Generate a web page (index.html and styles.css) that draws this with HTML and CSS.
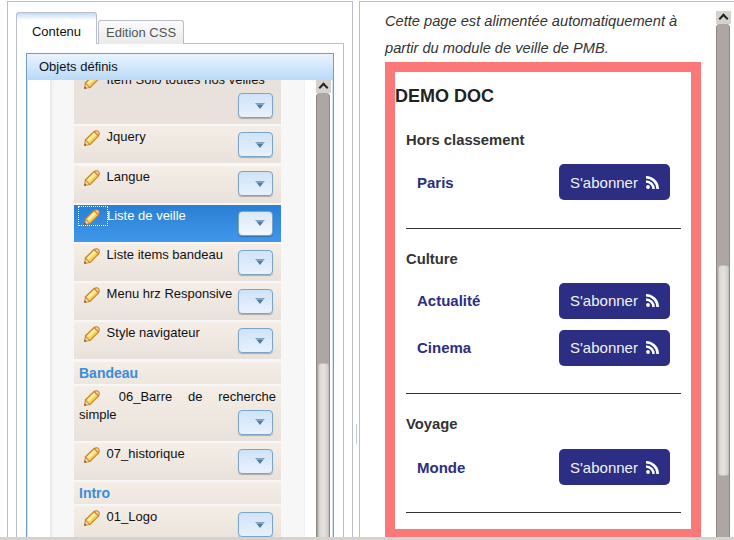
FILE: index.html
```html
<!DOCTYPE html>
<html lang="fr">
<head>
    <meta charset="UTF-8">
    <meta name="viewport" content="width=device-width, initial-scale=1.0">
    <title>Objets définis</title>
    <link rel="stylesheet" href="styles.css">
</head>
<body>
    <svg class="defs">
        <defs>
            <symbol id="pencil" viewBox="0 0 16 16">
                <path d="M0.3 15.7 L0.9 9.6 L9.4 1.2 Q12.6 -0.6 15 1.2 Q16.6 3.6 14.8 6.6 L6.4 15.1 Z" fill="#c67f2e"/>
                <path d="M2 10.2 L10 2.3 L13.8 6 L5.8 14 Z" fill="#f4cf55"/>
                <path d="M3 9.8 L10 2.9 L12 4.9 L5 11.8 Z" fill="#fdefa0"/>
                <path d="M11 1.8 Q13 0.9 14.3 1.8 Q15.2 3.2 14.3 5 Z" fill="#f3cda4"/>
                <path d="M1.7 11 L5 14.3 L1.2 14.9 Z" fill="#f0d6a8"/>
                <path d="M0.3 15.7 L0.6 13.4 L2.6 15.3 Z" fill="#6b4318"/>
            </symbol>
            <symbol id="arrow" viewBox="0 0 12 7">
                <path d="M0 0 H12 L10 2 H2 Z" fill="#7f9fbd"/>
                <path d="M2 2 H10 L6 7 Z" fill="#4f7ba3"/>
            </symbol>
            <symbol id="rss" viewBox="0 0 13 13">
                <circle cx="2" cy="11" r="1.9" fill="#fff"/>
                <path d="M0 4.2 A8.8 8.8 0 0 1 8.8 13 H6.2 A6.2 6.2 0 0 0 0 6.8 Z" fill="#fff"/>
                <path d="M0 0 A13 13 0 0 1 13 13 H10.4 A10.4 10.4 0 0 0 0 2.6 Z" fill="#fff"/>
            </symbol>
        </defs>
    </svg>

    <div class="workspace">
        <section class="panel panel-left">
            <div class="tabs">
                <div class="tab tab-active">Contenu</div>
                <div class="tab">Edition CSS</div>
            </div>
            <div class="tab-body">
                <div class="objets">
                    <div class="objets-title">Objets définis</div>
                    <div class="objets-body">
                        <div class="list-col">
                            <div class="list">
                                <div class="row row-first">
                                    <span class="pencil"><svg><use href="#pencil"/></svg></span> Item Solo toutes nos veilles
                                    <span class="drop"><svg><use href="#arrow"/></svg></span>
                                </div>
                                <div class="row">
                                    <span class="pencil"><svg><use href="#pencil"/></svg></span> Jquery
                                    <span class="drop"><svg><use href="#arrow"/></svg></span>
                                </div>
                                <div class="row">
                                    <span class="pencil"><svg><use href="#pencil"/></svg></span> Langue
                                    <span class="drop"><svg><use href="#arrow"/></svg></span>
                                </div>
                                <div class="row row-selected">
                                    <span class="pencil pencil-focus"><svg><use href="#pencil"/></svg></span>Liste de veille
                                    <span class="drop"><svg><use href="#arrow"/></svg></span>
                                </div>
                                <div class="row">
                                    <span class="pencil"><svg><use href="#pencil"/></svg></span> Liste items bandeau
                                    <span class="drop"><svg><use href="#arrow"/></svg></span>
                                </div>
                                <div class="row">
                                    <span class="pencil"><svg><use href="#pencil"/></svg></span> Menu hrz Responsive
                                    <span class="drop"><svg><use href="#arrow"/></svg></span>
                                </div>
                                <div class="row">
                                    <span class="pencil"><svg><use href="#pencil"/></svg></span> Style navigateur
                                    <span class="drop"><svg><use href="#arrow"/></svg></span>
                                </div>
                                <div class="group">Bandeau</div>
                                <div class="row">
                                    <span class="pencil"><svg><use href="#pencil"/></svg></span> 06_Barre de recherche simple
                                    <span class="drop"><svg><use href="#arrow"/></svg></span>
                                </div>
                                <div class="row">
                                    <span class="pencil"><svg><use href="#pencil"/></svg></span> 07_historique
                                    <span class="drop"><svg><use href="#arrow"/></svg></span>
                                </div>
                                <div class="group">Intro</div>
                                <div class="row">
                                    <span class="pencil"><svg><use href="#pencil"/></svg></span> 01_Logo
                                    <span class="drop"><svg><use href="#arrow"/></svg></span>
                                </div>
                            </div>
                        </div>
                        <div class="vscroll vscroll-left">
                            <div class="vscroll-up"></div>
                            <div class="vscroll-track"><div class="vscroll-thumb"></div></div>
                        </div>
                    </div>
                </div>
            </div>
        </section>

        <div class="splitter"><span class="splitter-grip"></span></div>

        <section class="panel panel-right">
            <div class="page">
                <p class="intro">Cette page est alimentée automatiquement à partir du module de veille de PMB.</p>
                <div class="veille">
                    <h2 class="veille-title">DEMO DOC</h2>
                    <div class="veille-group">
                        <h3>Hors classement</h3>
                        <div class="veille-row">
                            <a class="veille-name">Paris</a>
                            <a class="subscribe">S'abonner <svg><use href="#rss"/></svg></a>
                        </div>
                    </div>
                    <div class="veille-group">
                        <h3>Culture</h3>
                        <div class="veille-row">
                            <a class="veille-name">Actualité</a>
                            <a class="subscribe">S'abonner <svg><use href="#rss"/></svg></a>
                        </div>
                        <div class="veille-row">
                            <a class="veille-name">Cinema</a>
                            <a class="subscribe">S'abonner <svg><use href="#rss"/></svg></a>
                        </div>
                    </div>
                    <div class="veille-group">
                        <h3>Voyage</h3>
                        <div class="veille-row">
                            <a class="veille-name">Monde</a>
                            <a class="subscribe">S'abonner <svg><use href="#rss"/></svg></a>
                        </div>
                    </div>
                </div>
            </div>
            <div class="vscroll vscroll-right">
                <div class="vscroll-up"></div>
                <div class="vscroll-track"><div class="vscroll-thumb"></div></div>
            </div>
        </section>
    </div>
    <div class="hscroll"></div>
</body>
</html>
```

FILE: styles.css
```css
html, body {
    height: 100%;
}
body {
    margin: 0;
    display: flex;
    flex-direction: column;
    overflow: hidden;
    font-family: "Liberation Sans", Arial, sans-serif;
    background: #ffffff;
    color: #111111;
}
.defs {
    display: none;
}
.workspace {
    flex: 1;
    min-height: 0;
    display: flex;
    padding: 1px 0 0 7px;
    overflow: hidden;
}
.hscroll {
    height: 3px;
    background: #d6d3cf;
}

/* panels */
.panel {
    box-sizing: border-box;
    border: 1px solid #b9bdcc;
    border-bottom: none;
    min-height: 0;
}
.panel-left {
    width: 346px;
    display: flex;
    flex-direction: column;
    padding: 10px 8px 0 8px;
}
.panel-right {
    flex: 1;
    display: flex;
    border-right: none;
    overflow: hidden;
}
.splitter {
    width: 6px;
    display: flex;
    align-items: flex-end;
    justify-content: center;
    padding-bottom: 93px;
    box-sizing: border-box;
}
.splitter-grip {
    width: 1px;
    height: 20px;
    background: #c5c9d4;
}

/* tabs */
.tabs {
    display: flex;
    align-items: flex-end;
    gap: 1px;
    position: relative;
    z-index: 1;
    margin-bottom: -1px;
}
.tab {
    box-sizing: border-box;
    height: 24px;
    padding: 0 7px;
    line-height: 23px;
    font-size: 13px;
    color: #555555;
    background: linear-gradient(#fbfbfb, #eaeaea);
    border: 1px solid #b9bdcc;
    border-bottom: none;
    border-radius: 3px 3px 0 0;
}
.tab-active {
    width: 81px;
    height: 32px;
    padding: 5px 0 0;
    text-align: center;
    line-height: 27px;
    color: #111111;
    background: linear-gradient(#bfdcf8, #ffffff 7px);
}
.tab-body {
    flex: 1;
    min-height: 0;
    border: 1px solid #b9bdcc;
    border-bottom: none;
    padding: 9px 9px 0;
}
.objets {
    height: 100%;
    box-sizing: border-box;
    display: flex;
    flex-direction: column;
    border: 1px solid #6f9cc3;
    border-bottom: none;
}
.objets-title {
    height: 26px;
    line-height: 25px;
    padding-left: 12px;
    font-size: 13px;
    background: linear-gradient(#e9f4fe, #b9daf9);
}
.objets-body {
    flex: 1;
    min-height: 0;
    display: flex;
    padding-left: 22px;
    border-left: 1px solid #cfe3f6;
    border-right: 1px solid #cfe3f6;
    overflow: hidden;
}

/* list */
.list-col {
    width: 255px;
    flex-shrink: 0;
    background: #f7f7f7;
    box-shadow: inset 4px 0 3px -2px rgba(0, 0, 0, 0.07), inset -1px 0 1px rgba(0, 0, 0, 0.03);
    padding-left: 24px;
    box-sizing: border-box;
    overflow: hidden;
}
.list {
    width: 207px;
    display: flex;
    flex-direction: column;
    gap: 2.2px;
    margin-top: -10.7px;
    font-size: 13px;
    line-height: 18px;
}
.row {
    display: flow-root;
    padding: 2px 5px 0;
    text-align: justify;
    background: linear-gradient(#f5eee6, #e9e2dc);
}
.row-first {
    background: #e9e2dc;
}
.row-selected {
    color: #ffffff;
    background: linear-gradient(#2a7fd3, #4197e9);
}
.pencil {
    display: inline-block;
    height: 18px;
    padding: 0 3px 0 5px;
    vertical-align: top;
}
.pencil svg {
    display: block;
    width: 16px;
    height: 16px;
    margin-top: 2px;
}
.pencil-focus {
    padding-right: 7px;
    outline: 1px dotted #ffffff;
}
.drop {
    float: right;
    box-sizing: border-box;
    width: 35px;
    height: 25px;
    margin: 3.8px 3px 6.2px 0;
    display: flex;
    align-items: center;
    justify-content: center;
    padding: 0 0 0 8px;
    border: 1px solid #7aa4c8;
    border-radius: 4px;
    background: linear-gradient(#cfe3f7, #e8f2fc);
    box-shadow: 0 1px 1px rgba(0, 0, 0, 0.25);
}
.drop svg {
    width: 10px;
    height: 6px;
}
.row-selected .drop {
    background: linear-gradient(#dbe8f5, #f4f8fc);
}
.group {
    height: 22px;
    line-height: 22px;
    padding-left: 5px;
    font-size: 14px;
    font-weight: bold;
    color: #3a8ddc;
    background: linear-gradient(#f5eee6, #ede6df);
}

/* scrollbars */
.vscroll {
    display: flex;
    flex-direction: column;
    flex-shrink: 0;
    box-sizing: border-box;
}
.vscroll-left {
    width: 15px;
    margin-left: 11px;
}
.vscroll-right {
    width: 15px;
    margin-top: 9px;
}
.vscroll-up {
    height: 13px;
    flex-shrink: 0;
    background: #d6d3cf;
    position: relative;
}
.vscroll-up::before {
    content: "";
    position: absolute;
    left: 4px;
    top: 4px;
    width: 7px;
    height: 7px;
    border-left: 2px solid #222222;
    border-top: 2px solid #222222;
    transform: rotate(45deg);
    box-sizing: border-box;
}
.vscroll-track {
    flex: 1;
    min-height: 0;
    overflow: hidden;
    width: 14px;
    box-sizing: border-box;
    padding-left: 1px;
    background: #aea6a2;
    border-left: 1px solid #8e8985;
    border-right: 1px solid #8e8985;
    border-radius: 4px 4px 0 0;
}
.vscroll-thumb {
    box-sizing: border-box;
    border: 1px solid #c2bfbb;
    border-radius: 3px;
    background: linear-gradient(90deg, #d8d5d1, #e4e2df 50%, #d2cfcb);
}
.vscroll-left .vscroll-thumb {
    margin-top: 270px;
    height: 300px;
}
.vscroll-right .vscroll-thumb {
    margin-top: 241px;
    height: 211px;
}

/* right side */
.page {
    width: 356px;
    flex-shrink: 0;
    padding: 6px 0 0 25px;
    box-sizing: border-box;
}
.intro {
    margin: 0;
    width: 316px;
    font-size: 14.65px;
    font-style: italic;
    line-height: 27px;
    color: #333333;
}
.veille {
    width: 316px;
    box-sizing: border-box;
    border: 10px solid #fb7878;
    background: #ffffff;
}
.veille-title {
    margin: 14px 0 0;
    font-size: 18px;
    line-height: 20px;
    color: #222222;
}
.veille-group {
    margin: 0 10px 20px 11px;
    padding-bottom: 27.5px;
    border-bottom: 1px solid #333333;
}
.veille-title + .veille-group {
    margin-top: 24px;
}
.veille-group:last-child {
    margin-bottom: 16px;
    padding-bottom: 27px;
}
.veille-group h3 {
    margin: 0 0 14px;
    font-size: 14.8px;
    line-height: 20px;
    color: #333333;
}
.veille-group:last-child h3 {
    margin-bottom: 15px;
}
.veille-row {
    display: flex;
    justify-content: space-between;
    align-items: center;
    padding: 0 11px;
}
.veille-row + .veille-row {
    margin-top: 11px;
}
.veille-name {
    font-size: 15px;
    font-weight: bold;
    color: #2b2e82;
}
.subscribe {
    box-sizing: border-box;
    width: 111px;
    height: 36px;
    padding: 0 11px;
    display: flex;
    align-items: center;
    justify-content: space-between;
    font-size: 15px;
    color: #f2f2f8;
    background: #2b2e82;
    border-radius: 5px;
}
.subscribe svg {
    width: 13px;
    height: 13px;
}
```
